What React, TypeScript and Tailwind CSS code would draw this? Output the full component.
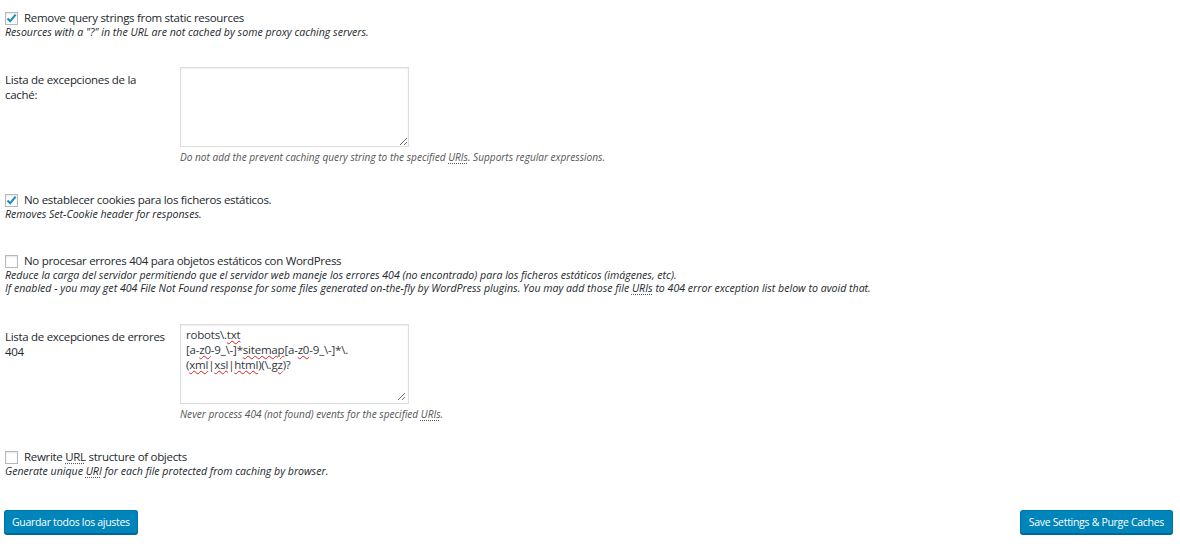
import React from 'react';

const Check: React.FC<{ checked?: boolean }> = ({ checked }) => (
  <span className="w-[13px] h-[13px] shrink-0 border border-[#b4b9be] bg-white shadow-[inset_0_1px_2px_rgba(0,0,0,0.1)] flex items-center justify-center mr-[6px]">
    {checked && (
      <svg width="11" height="11" viewBox="0 0 11 11">
        <path d="M1.5 5.4 L4.2 8.2 L9.6 1.6" fill="none" stroke="#1e8cbe" strokeWidth="2.1" />
      </svg>
    )}
  </span>
);

const Abbr: React.FC<{ children: React.ReactNode }> = ({ children }) => (
  <span className="underline decoration-dotted decoration-[#555] underline-offset-2">{children}</span>
);

const Spell: React.FC<{ children: React.ReactNode }> = ({ children }) => (
  <span className="underline decoration-wavy decoration-[#e02020] decoration-1 underline-offset-1">{children}</span>
);

const Grip = () => (
  <svg className="absolute right-[2px] bottom-[2px]" width="9" height="9" viewBox="0 0 9 9">
    <path d="M8 1 L1 8 M8 5 L5 8" stroke="#777" strokeWidth="1" />
  </svg>
);

const CheckRow: React.FC<{ checked?: boolean; label: React.ReactNode; desc: React.ReactNode[]; className?: string }> = ({
  checked,
  label,
  desc,
  className,
}) => (
  <div className={className}>
    <label className="flex items-center h-[16px] text-[11.5px] tracking-[-0.3px] text-[#23282d]">
      <Check checked={checked} />
      <span>{label}</span>
    </label>
    {desc.map((d, i) => (
      <div key={i} className="text-[10.6px] italic leading-[13px] text-[#23282d]">
        {d}
      </div>
    ))}
  </div>
);

export default function App() {
  return (
    <div
      className="w-[1180px] h-[544px] bg-white pl-[5px] pr-[7px] pt-[10px] overflow-hidden"
      style={{ fontFamily: '"Open Sans", "Noto Sans", sans-serif' }}
    >
      <CheckRow
        checked
        label="Remove query strings from static resources"
        desc={['Resources with a "?" in the URL are not cached by some proxy caching servers.']}
      />

      <div className="flex mt-[28px]">
        <div className="w-[175px] pt-[5px] text-[11.5px] tracking-[-0.3px] leading-[15px] text-[#23282d]">
          Lista de excepciones de la
          <br />
          caché:
        </div>
        <div>
          <textarea className="block w-[229px] h-[80px] border border-[#ddd] shadow-[inset_0_1px_2px_rgba(0,0,0,0.07)] bg-white outline-none" />
          <div className="mt-[3px] text-[10.1px] italic leading-[14px] text-[#555]">
            Do not add the prevent caching query string to the specified <Abbr>URIs</Abbr>. Supports regular expressions.
          </div>
        </div>
      </div>

      <CheckRow
        className="mt-[28px]"
        checked
        label="No establecer cookies para los ficheros estáticos."
        desc={['Removes Set-Cookie header for responses.']}
      />

      <CheckRow
        className="mt-[32px]"
        label="No procesar errores 404 para objetos estáticos con WordPress"
        desc={[
          'Reduce la carga del servidor permitiendo que el servidor web maneje los errores 404 (no encontrado) para los ficheros estáticos (imágenes, etc).',
          <>
            If enabled - you may get 404 File Not Found response for some files generated on-the-fly by WordPress plugins. You may add
            those file <Abbr>URIs</Abbr> to 404 error exception list below to avoid that.
          </>,
        ]}
      />

      <div className="flex mt-[29px]">
        <div className="w-[175px] pt-[5px] text-[11.5px] tracking-[-0.3px] leading-[15px] text-[#23282d]">
          Lista de excepciones de errores
          <br />
          404
        </div>
        <div>
          <div className="relative w-[229px] h-[80px] border border-[#ddd] shadow-[inset_0_1px_2px_rgba(0,0,0,0.07)] bg-white px-[5px] pt-[2px] text-[11.5px] tracking-[-0.2px] leading-[15px] text-[#32373c]">
            <div>
              robots\.<Spell>txt</Spell>
            </div>
            <div>
              [a-<Spell>z0</Spell>-9_\-]*<Spell>sitemap</Spell>[a-<Spell>z0</Spell>-9_\-]*\.
            </div>
            <div>
              (<Spell>xml</Spell>|<Spell>xsl</Spell>|<Spell>html</Spell>)(\.<Spell>gz</Spell>)?
            </div>
            <Grip />
          </div>
          <div className="mt-[3px] text-[10.1px] italic leading-[14px] text-[#555]">
            Never process 404 (not found) events for the specified <Abbr>URIs</Abbr>.
          </div>
        </div>
      </div>

      <CheckRow
        className="mt-[28px]"
        label={
          <>
            Rewrite <Abbr>URL</Abbr> structure of objects
          </>
        }
        desc={[
          <>
            Generate unique <Abbr>URI</Abbr> for each file protected from caching by browser.
          </>,
        ]}
      />

      <div className="flex justify-between mt-[32px]">
        <button className="h-[24px] px-[7px] ml-[-1px] rounded-[3px] bg-[#0085ba] border border-[#0073aa] border-b-[#006799] shadow-[0_1px_0_#006799] text-white text-[10.5px] tracking-[-0.3px] leading-[22px]">
          Guardar todos los ajustes
        </button>
        <button className="h-[24px] px-[8px] rounded-[3px] bg-[#0085ba] border border-[#0073aa] border-b-[#006799] shadow-[0_1px_0_#006799] text-white text-[10.5px] tracking-[-0.3px] leading-[22px]">
          Save Settings &amp; Purge Caches
        </button>
      </div>
    </div>
  );
}
